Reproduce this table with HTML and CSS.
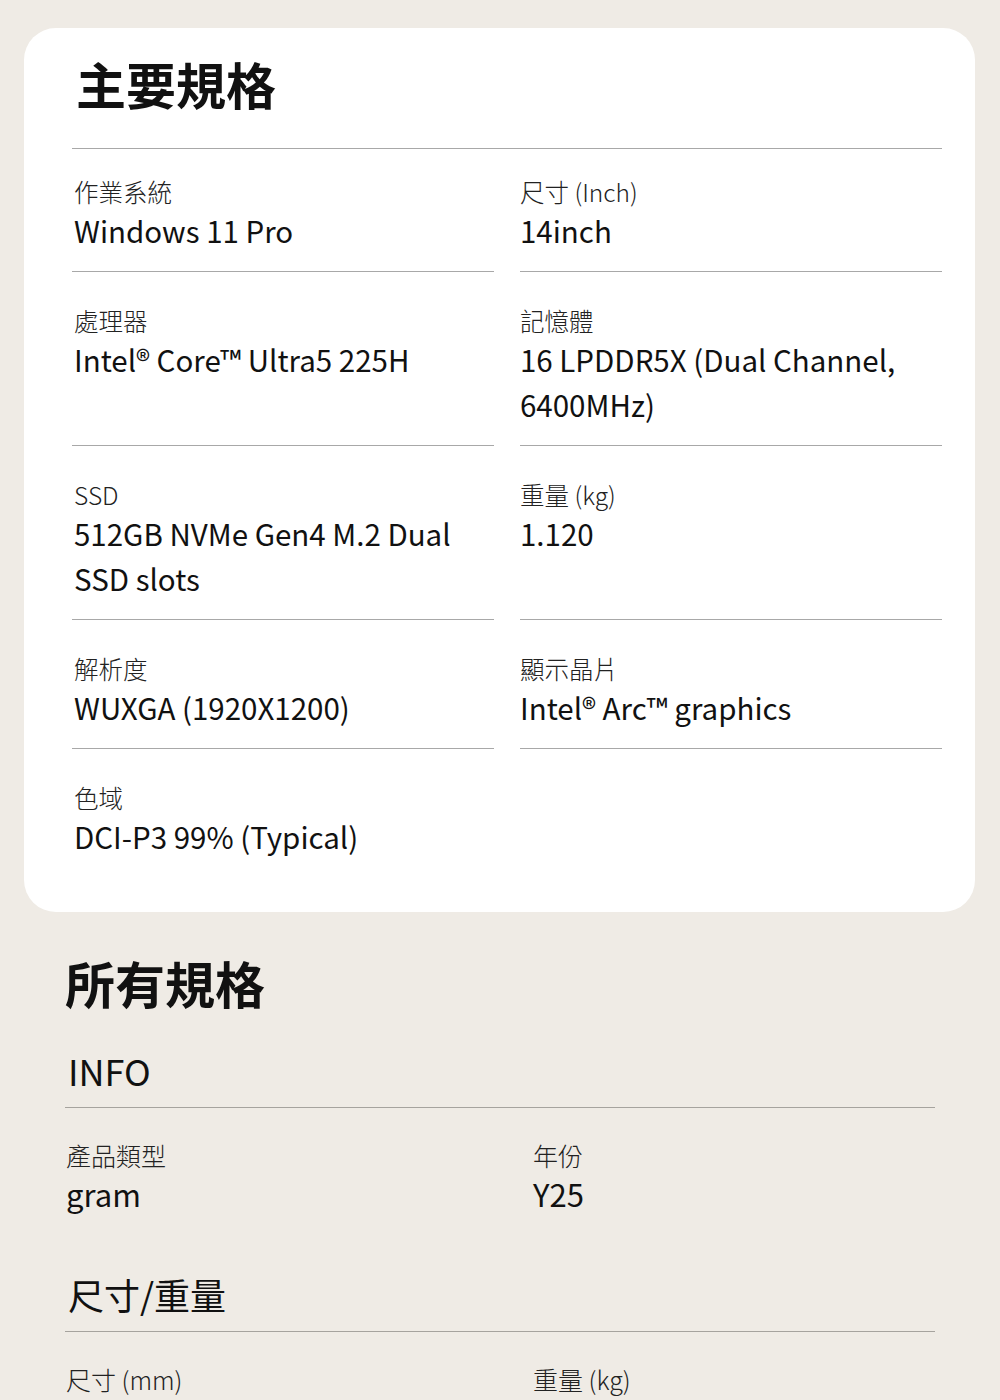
FILE: index.html
```html
<!DOCTYPE html>
<html lang="zh-Hant">
<head>
<meta charset="utf-8">
<title>規格</title>
<link rel="stylesheet" href="styles.css">
</head>
<body>
<section class="card">
  <h2 class="card-title">主要規格</h2>
  <div class="spec-grid first">
    <div class="spec"><div class="label">作業系統</div><div class="value">Windows 11 Pro</div></div>
    <div class="spec"><div class="label">尺寸 (Inch)</div><div class="value">14inch</div></div>
    <div class="spec"><div class="label">處理器</div><div class="value">Intel® Core™ Ultra5 225H</div></div>
    <div class="spec"><div class="label">記憶體</div><div class="value">16 LPDDR5X (Dual Channel, 6400MHz)</div></div>
    <div class="spec"><div class="label">SSD</div><div class="value">512GB NVMe Gen4 M.2 Dual SSD slots</div></div>
    <div class="spec"><div class="label">重量 (kg)</div><div class="value">1.120</div></div>
    <div class="spec"><div class="label">解析度</div><div class="value">WUXGA (1920X1200)</div></div>
    <div class="spec"><div class="label">顯示晶片</div><div class="value">Intel® Arc™ graphics</div></div>
    <div class="spec last"><div class="label">色域</div><div class="value">DCI-P3 99% (Typical)</div></div>
  </div>
</section>

<section class="all">
  <h2 class="all-title">所有規格</h2>
  <h3 class="group-title">INFO</h3>
  <div class="spec-grid wide">
    <div class="spec plain"><div class="label">產品類型</div><div class="value">gram</div></div>
    <div class="spec plain"><div class="label">年份</div><div class="value">Y25</div></div>
  </div>
  <h3 class="group-title">尺寸/重量</h3>
  <div class="spec-grid wide">
    <div class="spec plain"><div class="label">尺寸 (mm)</div><div class="value"></div></div>
    <div class="spec plain"><div class="label">重量 (kg)</div><div class="value"></div></div>
  </div>
</section>
</body>
</html>
```

FILE: styles.css
```css
* { box-sizing: border-box; }

html, body {
  margin: 0;
  padding: 0;
}

body {
  background: #efebe5;
  font-family: "Noto Sans CJK TC", "Noto Sans", sans-serif;
  color: #111;
  width: 1000px;
  height: 1400px;
  overflow: hidden;
}

h2, h3 { margin: 0; }

.card {
  margin: 28px 25px 0 24px;
  background: #ffffff;
  border-radius: 32px;
  padding: 19px 33px 35px 48px;
}

.card-title {
  font-size: 50px;
  line-height: 72px;
  font-weight: 700;
  padding: 0 0 29px 4px;
  border-bottom: 1px solid #a8a8a8;
  color: #111;
}

.spec-grid {
  display: grid;
  grid-template-columns: 1fr 1fr;
  column-gap: 26px;
}

.spec {
  padding: 33px 1px 18px 2px;
  border-bottom: 1px solid #a8a8a8;
}

.spec-grid.first .spec:nth-child(-n+2) {
  padding-top: 27px;
}

.spec-grid.first .spec:nth-child(even) {
  padding-left: 0;
}

.spec.last {
  border-bottom: none;
}

.label {
  font-size: 24.5px;
  line-height: 32px;
  font-weight: 300;
  color: #222;
}

.value {
  font-size: 29.5px;
  line-height: 45px;
  font-weight: 400;
  color: #111;
  min-height: 45px;
}

.all {
  padding: 34px 65px 0 65px;
}

.all-title {
  font-size: 50px;
  line-height: 72px;
  font-weight: 700;
  margin-bottom: 25px;
  color: #111;
}

.group-title {
  font-size: 36px;
  line-height: 54px;
  font-weight: 400;
  padding: 0 0 10px 3px;
  border-bottom: 1px solid #a6a39e;
  color: #111;
}

.spec-grid.wide {
  column-gap: 64px;
  margin-bottom: 33px;
}

.spec.plain {
  border-bottom: none;
  padding: 31px 1px 18px 1px;
}

.spec.plain .label {
  font-size: 25px;
}

.spec.plain .value {
  font-size: 31px;
}
```
